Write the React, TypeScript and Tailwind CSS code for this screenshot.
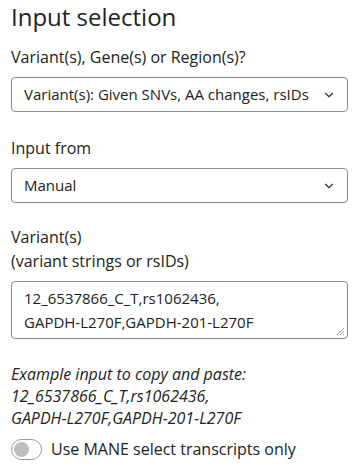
import { ChevronDown } from 'lucide-react'

const Select = ({ value }: { value: string }) => (
  <div className="flex h-[35px] items-center justify-between rounded-[4px] border border-[#8a8a8f] pl-[12px] pr-[11px] text-[15px]">
    <span>{value}</span>
    <ChevronDown className="h-[14px] w-[14px] text-[#333]" strokeWidth={2} />
  </div>
)

export default function App() {
  return (
    <div
      className="min-h-[474px] bg-white px-[11px] pt-[1px] text-[#222]"
      style={{ fontFamily: '"Open Sans", sans-serif' }}
    >
      <h1 className="text-[24px] leading-[32px]">Input selection</h1>

      <label className="mt-[12px] block text-[16px] leading-[24px]">Variant(s), Gene(s) or Region(s)?</label>
      <div className="mt-[8px]">
        <Select value="Variant(s): Given SNVs, AA changes, rsIDs" />
      </div>

      <label className="mt-[24px] block text-[16px] leading-[24px]">Input from</label>
      <div className="mt-[8px]">
        <Select value="Manual" />
      </div>

      <label className="mt-[22px] block text-[16px] leading-[24px]">
        Variant(s)
        <br />
        (variant strings or rsIDs)
      </label>
      <div className="relative mt-[8px] h-[58px] rounded-[4px] border border-[#8a8a8f] px-[12px] pt-[4px] text-[15px] leading-[24px]">
        12_6537866_C_T,rs1062436,
        <br />
        GAPDH-L270F,GAPDH-201-L270F
        <svg className="absolute bottom-[2px] right-[2px]" width="9" height="9" viewBox="0 0 9 9">
          <path d="M8 1 L1 8 M8 4 L4 8 M8 7 L7 8" stroke="#999" strokeWidth="1" />
        </svg>
      </div>

      <p className="mt-[24px] text-[16px] italic leading-[22px]">
        Example input to copy and paste:
        <br />
        12_6537866_C_T,rs1062436,
        <br />
        GAPDH-L270F,GAPDH-201-L270F
      </p>

      <div className="mt-[8px] flex items-center gap-[9px]">
        <span className="flex h-[21px] w-[31px] items-center rounded-full border border-[#999] px-[2px]">
          <span className="h-[15px] w-[15px] rounded-full bg-[#bdbdbd]" />
        </span>
        <span className="text-[16px] leading-[24px]">Use MANE select transcripts only</span>
      </div>
    </div>
  )
}
